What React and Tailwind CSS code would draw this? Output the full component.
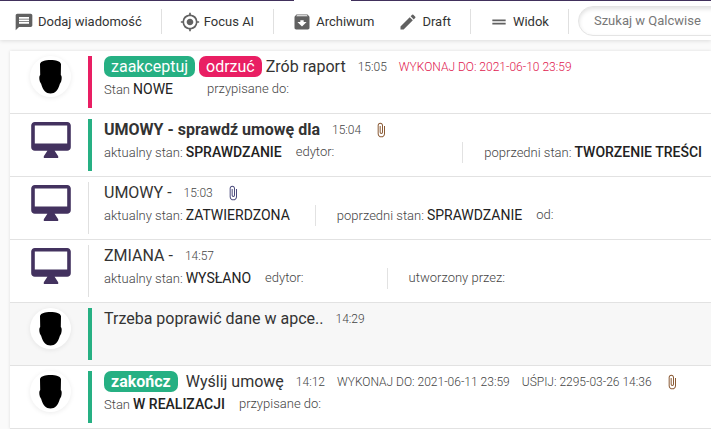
import clsx from 'clsx';
import {
  MdMessage,
  MdMyLocation,
  MdArchive,
  MdEdit,
  MdDragHandle,
  MdAttachFile,
} from 'react-icons/md';

const toolbar = [
  [{ label: 'Dodaj wiadomość', icon: MdMessage }],
  [{ label: 'Focus AI', icon: MdMyLocation }],
  [{ label: 'Archiwum', icon: MdArchive }, { label: 'Draft', icon: MdEdit }],
  [{ label: 'Widok', icon: MdDragHandle }],
];

const rows = [
  {
    kind: 'person',
    bar: 'pink',
    actions: [{ label: 'zaakceptuj' }, { label: 'odrzuć', danger: true }],
    title: 'Zrób raport',
    time: '15:05',
    due: 'WYKONAJ DO: 2021-06-10 23:59',
    overdue: true,
    fields: [{ label: 'Stan', value: 'NOWE', space: 'mr-5' }, { label: 'przypisane do:' }],
  },
  {
    kind: 'process',
    bar: 'green',
    unread: true,
    title: 'UMOWY - sprawdź umowę dla',
    time: '15:04',
    attachment: 'text-[#8a5a34]',
    fields: [
      { label: 'aktualny stan:', value: 'SPRAWDZANIE' },
      { label: 'edytor:', space: 'mr-[114px]' },
      { label: 'poprzedni stan:', value: 'TWORZENIE TREŚCI', divided: true },
    ],
  },
  {
    kind: 'process',
    title: 'UMOWY -',
    time: '15:03',
    attachment: 'text-[#4a4a7c]',
    fields: [
      { label: 'aktualny stan:', value: 'ZATWIERDZONA', space: 'mr-[11px]' },
      { label: 'poprzedni stan:', value: 'SPRAWDZANIE', divided: true },
      { label: 'od:' },
    ],
  },
  {
    kind: 'process',
    title: 'ZMIANA -',
    time: '14:57',
    fields: [
      { label: 'aktualny stan:', value: 'WYSŁANO' },
      { label: 'edytor:', space: 'mr-[69px]' },
      { label: 'utworzony przez:', divided: true },
    ],
  },
  {
    kind: 'person',
    bar: 'green',
    selected: true,
    title: 'Trzeba poprawić dane w apce..',
    time: '14:29',
    fields: [],
  },
  {
    kind: 'person',
    bar: 'green',
    unread: true,
    actions: [{ label: 'zakończ' }],
    title: 'Wyślij umowę',
    plainTitle: true,
    time: '14:12',
    due: 'WYKONAJ DO: 2021-06-11 23:59',
    snooze: 'UŚPIJ: 2295-03-26 14:36',
    attachment: 'text-[#8a5a34]',
    fields: [{ label: 'Stan', value: 'W REALIZACJI' }, { label: 'przypisane do:' }],
  },
];

function Avatar() {
  return (
    <div className="flex h-[41px] w-[41px] items-center justify-center rounded-full bg-white shadow-[0_1px_5px_rgba(0,0,0,0.08)]">
      <svg width="23" height="34" viewBox="0 0 23 34" aria-hidden="true">
        <path d="M1 4C2 1 6 0 11.500 0S21 1 22 4L21.800 15C23 16 23 19 22 22C21.500 23 21 23 20.500 25C19 30 16 33.500 11.500 33.500S4 30 2.500 25C2 23 1.500 23 1 22C0 19 0 16 1.200 15Z" fill="#000" />
      </svg>
    </div>
  );
}

function Monitor() {
  return (
    <svg viewBox="1 2 22 20" className="mt-[3px] h-9 w-10 text-[#43325f]" fill="currentColor" aria-hidden="true">
      <path d="M21 2H3c-1.100 0-2 .9-2 2v12c0 1.100.9 2 2 2h7l-2 3v1h8v-1l-2-3h7c1.100 0 2-.9 2-2V4c0-1.100-.9-2-2-2zm0 12H3V4h18v10z" />
    </svg>
  );
}

function Field({ field, unread }) {
  return (
    <div className={clsx('flex items-baseline whitespace-nowrap', field.divided && 'border-l border-[#e2e2e2] pl-[21px]', field.space)}>
      <span className="text-[13px] leading-5 font-light text-[#444]">{field.label}</span>
      {field.value && (
        <span className={clsx('ml-[3px] text-sm leading-5 text-[#222]', unread && 'font-medium')}>{field.value}</span>
      )}
    </div>
  );
}

function MessageRow({ row }) {
  return (
    <li className={clsx('flex min-h-[63px] border-b border-[#e2e2e2] py-[5px]', row.selected ? 'bg-[#f7f7f7]' : 'bg-white')}>
      <div className="flex w-[78px] shrink-0 items-start justify-center pl-[3px]">
        {row.kind === 'person' ? <Avatar /> : <Monitor />}
      </div>
      <div
        className={clsx('shrink-0', {
          'w-1 bg-[#e91e63]': row.bar === 'pink',
          'w-1 bg-[#26b083]': row.bar === 'green',
          'mr-[3px] w-px bg-[#e0e0e0]': !row.bar,
        })}
      />
      <div className="min-w-0 flex-1 overflow-hidden pl-3">
        <div className="flex items-center gap-3 whitespace-nowrap">
          <div className="flex items-center gap-1">
            {row.actions?.map((action) => (
              <button
                key={action.label}
                type="button"
                className={clsx(
                  'h-[21px] cursor-pointer rounded-[7px] px-[7px] text-base leading-[21px] text-white',
                  action.danger ? 'bg-[#e91e63]' : 'bg-[#26b083]',
                  row.unread && 'mr-1 font-bold'
                )}
              >
                {action.label}
              </button>
            ))}
            <h2 className={clsx('text-base leading-[21px] text-[#333]', row.unread && !row.plainTitle && 'font-bold')}>{row.title}</h2>
          </div>
          <time className="text-xs font-light text-[#444]">{row.time}</time>
          {row.due && <span className={clsx('text-xs font-light', row.overdue ? 'text-[#e0194f]' : 'text-[#444]')}>{row.due}</span>}
          {row.snooze && <span className="text-xs font-light text-[#444]">{row.snooze}</span>}
          {row.attachment && <MdAttachFile className={clsx('h-4 w-4', row.attachment)} />}
        </div>
        <div className="mt-[2px] flex gap-[14px]">
          {row.fields.map((field) => (
            <Field key={field.label} field={field} unread={row.unread} />
          ))}
        </div>
      </div>
    </li>
  );
}

export default function App() {
  return (
    <div className="min-h-screen overflow-hidden bg-[#fafafa] font-['Roboto',sans-serif]">
      <div className="flex h-px bg-[#43325f] pl-[294px]">
        <div className="w-[57px] bg-white" />
      </div>
      <header className="flex h-[39px] items-center bg-white shadow-[0_1px_4px_rgba(0,0,0,0.12)]">
        <nav className="flex shrink-0 items-center pt-[2px]">
          {toolbar.map((group) => (
            <div key={group[0].label} className="flex h-[25px] items-center gap-6 border-r border-[#e0e0e0] pr-[19px] pl-[18px] first:pl-[14px]">
              {group.map(({ label, icon: Icon }) => (
                <button key={label} type="button" className="flex cursor-pointer items-center gap-1 text-[13px] whitespace-nowrap text-[#333]">
                  <Icon className="h-5 w-5 text-[#616161]" />
                  {label}
                </button>
              ))}
            </div>
          ))}
        </nav>
        <div className="min-w-0 flex-1 overflow-hidden pl-[9px]">
          <input
            type="search"
            aria-label="Szukaj w Qalcwise"
            placeholder="Szukaj w Qalcwise"
            className="h-[30px] w-60 rounded-full border border-[#e4e4e4] bg-white px-[15px] text-[13px] shadow-[inset_0_2px_4px_rgba(0,0,0,0.12)] outline-none placeholder:text-[#777]"
          />
        </div>
      </header>
      <main className="pt-[11px] pl-[10px]">
        <ul className="shadow-[0_0_3px_rgba(0,0,0,0.12)]">
          {rows.map((row) => (
            <MessageRow key={row.time} row={row} />
          ))}
        </ul>
      </main>
    </div>
  );
}
